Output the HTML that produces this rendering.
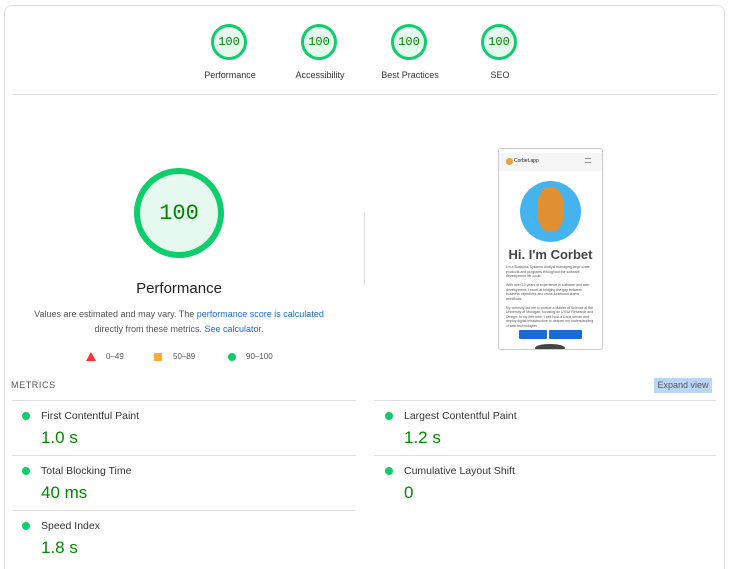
<!DOCTYPE html>
<html><head><meta charset="utf-8"><style>
*{margin:0;padding:0;box-sizing:border-box}
html,body{width:729px;height:569px;overflow:hidden}
body{background:#fff;font-family:"Liberation Sans",sans-serif;position:relative;color:#212121}
.a{position:absolute}
.card{left:4px;top:5px;width:721px;height:564px;border:1px solid #ddd;border-bottom:none;border-radius:8px 8px 0 0}
.g{width:36px;height:36px;border-radius:50%;border:3px solid #0cce6b;background:#e6f9ee;color:#080;font-family:"Liberation Mono",monospace;font-size:12px;display:flex;align-items:center;justify-content:center}
.lbl{font-size:9px;color:#333;width:100px;text-align:center}
.hr{height:1px;background:#e0e0e0}
.mt{font-size:10.5px;color:#333}
.mv{font-size:17px;color:#080}
.dot{width:8px;height:8px;border-radius:50%;background:#0cce6b}
</style></head><body>
<div class="a card"></div>
<div class="a g" style="left:211px;top:24px">100</div>
<div class="a g" style="left:301px;top:24px">100</div>
<div class="a g" style="left:391px;top:24px">100</div>
<div class="a g" style="left:481px;top:24px">100</div>
<div class="a lbl" style="left:180px;top:70px">Performance</div>
<div class="a lbl" style="left:270px;top:70px">Accessibility</div>
<div class="a lbl" style="left:360px;top:70px">Best Practices</div>
<div class="a lbl" style="left:450px;top:70px">SEO</div>
<div class="a hr" style="left:12px;top:94px;width:706px"></div>
<div class="a g" style="left:134px;top:168px;width:90px;height:90px;border-width:6px;font-size:22px">100</div>
<div class="a" style="left:80px;top:280px;width:198px;text-align:center;font-size:15px;color:#212121">Performance</div>
<div class="a" style="left:20px;top:307px;width:318px;text-align:center;font-size:9px;line-height:15px;color:#555">Values are estimated and may vary. The <span style="color:#1a6bd6">performance score is calculated</span> directly from these metrics. <span style="color:#1a6bd6">See calculator.</span></div>
<div class="a" style="left:86px;top:352px;width:0;height:0;border-left:5px solid transparent;border-right:5px solid transparent;border-bottom:9px solid #f33"></div>
<div class="a" style="left:106px;top:352px;font-size:8px;color:#555">0–49</div>
<div class="a" style="left:154px;top:353px;width:8px;height:8px;background:#fa3"></div>
<div class="a" style="left:173px;top:352px;font-size:8px;color:#555">50–89</div>
<div class="a dot" style="left:228px;top:353px"></div>
<div class="a" style="left:246px;top:352px;font-size:8px;color:#555">90–100</div>
<div class="a" style="left:364px;top:212px;width:1px;height:73px;background:#e0e0e0"></div>
<div class="a" style="left:498px;top:148px;width:105px;height:202px;border:1px solid #ccc;border-radius:3px;background:#fff;overflow:hidden">
<div class="a" style="left:0;top:4px;width:103px;height:18px;background:#f6f6f6"></div>
<div class="a" style="left:7px;top:9px;width:7px;height:7px;border-radius:50%;background:#e9a23b"></div>
<div class="a" style="left:15px;top:9px;font-size:5px">Corbet.app</div>
<div class="a" style="left:86px;top:9px;width:6px;height:5px;border-top:1px solid #999;border-bottom:1px solid #999"></div>
<div class="a" style="left:21px;top:32px;width:61px;height:61px;border-radius:50%;background:#45b4ee"></div>
<div class="a" style="left:38px;top:38px;width:27px;height:45px;border-radius:45%;background:#e09030"></div>
<div class="a" style="left:0;top:98px;width:103px;text-align:center;font-size:13px;font-weight:bold;color:#444">Hi. I'm Corbet</div>
<div class="a" style="left:7px;top:116px;width:90px;font-size:3.5px;line-height:4.5px;color:#555">I'm a Business Systems Analyst managing large scale products and programs throughout the software development life cycle.<br><br>With over 10 years of experience in software and web development, I excel at bridging the gap between business objectives and cross-functional teams workflows.<br><br>My curiosity led me to pursue a Master of Science at the University of Michigan, focusing on UX/UI Research and Design. In my free time, I self-host a Linux server and deploy digital infrastructure to deepen my understanding of web technologies.</div>
<div class="a" style="left:20px;top:181px;width:28px;height:9px;background:#1a6bd6;border-radius:1px"></div>
<div class="a" style="left:50px;top:181px;width:33px;height:9px;background:#1a6bd6;border-radius:1px"></div>
<div class="a" style="left:36px;top:195px;width:30px;height:8px;border-radius:50%;background:#444"></div>
</div>
<div class="a" style="left:11px;top:380px;font-size:9px;letter-spacing:.6px;color:#555">METRICS</div>
<div class="a" style="left:654px;top:378px;width:58px;height:15px;background:#b9d6f5;font-size:9px;color:#555;text-align:center;line-height:15px">Expand view</div>
<div class="a hr" style="left:12px;top:400px;width:344px"></div>
<div class="a hr" style="left:374px;top:400px;width:342px"></div>
<div class="a hr" style="left:12px;top:455px;width:344px"></div>
<div class="a hr" style="left:374px;top:455px;width:342px"></div>
<div class="a hr" style="left:12px;top:510px;width:344px"></div>
<div class="a dot" style="left:22px;top:412px"></div><div class="a mt" style="left:41px;top:410px">First Contentful Paint</div><div class="a mv" style="left:41px;top:428px">1.0 s</div>
<div class="a dot" style="left:385px;top:412px"></div><div class="a mt" style="left:404px;top:410px">Largest Contentful Paint</div><div class="a mv" style="left:404px;top:428px">1.2 s</div>
<div class="a dot" style="left:22px;top:467px"></div><div class="a mt" style="left:41px;top:465px">Total Blocking Time</div><div class="a mv" style="left:41px;top:483px">40 ms</div>
<div class="a dot" style="left:385px;top:467px"></div><div class="a mt" style="left:404px;top:465px">Cumulative Layout Shift</div><div class="a mv" style="left:404px;top:483px">0</div>
<div class="a dot" style="left:22px;top:522px"></div><div class="a mt" style="left:41px;top:520px">Speed Index</div><div class="a mv" style="left:41px;top:538px">1.8 s</div>
</body></html>
